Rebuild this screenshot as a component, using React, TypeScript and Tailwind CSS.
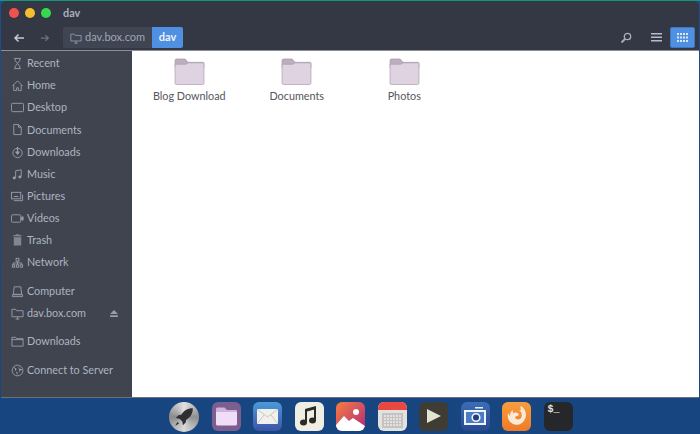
import React from "react";

const stroke = "#979daa";

const Ico = ({ children }: { children: React.ReactNode }) => (
  <svg width="13" height="13" viewBox="0 0 14 14" fill="none" stroke={stroke} strokeWidth="1" className="shrink-0">
    {children}
  </svg>
);

const sideIcons: Record<string, React.ReactNode> = {
  recent: <path d="M3.500 1.500h7M3.500 12.500h7M4.500 1.500v2.500L7 7 4.500 10v2.500M9.500 1.500v2.500L7 7l2.500 3v2.500" />,
  home: <path d="M1.500 7.500 7 2l5.500 5.500M3 6.500v6h3v-3h2v3h3v-6" />,
  desktop: <rect x="0.500" y="2.500" width="13" height="9" rx="1" />,
  documents: <path d="M3 1.500h5l3 3v8H3zM8 1.500v3h3" />,
  downloads: (
    <>
      <circle cx="7" cy="7.500" r="5" />
      <path d="M7 1v7M5 6l2 2.500L9 6" strokeWidth="1.400" />
    </>
  ),
  music: (
    <>
      <path d="M5 10.500V3l6-1v7.500" />
      <circle cx="3.500" cy="10.800" r="1.600" fill={stroke} stroke="none" />
      <circle cx="9.500" cy="9.800" r="1.600" fill={stroke} stroke="none" />
    </>
  ),
  pictures: (
    <>
      <rect x="0.500" y="2.500" width="10" height="7" />
      <path d="M12.500 5v6.500H3M3 7h5" />
    </>
  ),
  videos: (
    <>
      <rect x="0.500" y="3" width="10" height="8" rx="1" />
      <path d="M11 6l2-1v4l-2-1z" fill={stroke} />
    </>
  ),
  trash: (
    <>
      <path d="M3 3.500h8v9H3z" fill={stroke} stroke="none" opacity="0.75" />
      <path d="M2.500 2h9M5 1h4" />
    </>
  ),
  network: (
    <>
      <rect x="5.500" y="2.500" width="3" height="3" />
      <rect x="1.500" y="9.500" width="2.500" height="2.500" />
      <rect x="5.750" y="9.500" width="2.500" height="2.500" />
      <rect x="10" y="9.500" width="2.500" height="2.500" />
      <path d="M7 5.500v4M2.500 9.500V7.500h9v2" />
    </>
  ),
  computer: <path d="M3.500 2h7l1 8h-9zM1.500 10.500h11v2h-11z" />,
  share: <path d="M1 2.500h4l1 1.500h7v6.500H1zM7 10.500v2.500M5 13h4" />,
  folder: <path d="M1 2.500h4l1 1.500h7v8H1zM1 5h12" />,
  server: (
    <>
      <circle cx="7" cy="7" r="5.800" />
      <path d="M3 3l3 2-1 3 2 1v3.500M9 2l-1 2.500 3 1 1.500 1-3 .5-1 3" fill={stroke} stroke="none" />
    </>
  ),
};

const Row = ({ icon, label, eject }: { icon: string; label: string; eject?: boolean }) => (
  <div className="h-[22.100px] flex items-center pl-[10px] pr-[14px] gap-[3px]">
    <Ico>{sideIcons[icon]}</Ico>
    <span className="text-[10.800px] text-[#aeb4c0] leading-none whitespace-nowrap">{label}</span>
    {eject && (
      <svg width="8" height="7" viewBox="0 0 9 8" className="ml-auto" fill={stroke}>
        <path d="M4.500 0 9 4.500H0zM0 6h9v2H0z" />
      </svg>
    )}
  </div>
);

const Sep = ({ h }: { h: string }) => <div className={h} />;

const Folder = ({ label }: { label: string }) => (
  <div className="w-[107.500px] flex flex-col items-center">
    <svg width="31" height="27" viewBox="0 0 32 28" className="mt-[7px]">
      <path d="M1 2.500Q1 1 2.500 1h9l3 3.500H30Q31 4.500 31 6v4H1z" fill="#bcaebf" stroke="#a598a8" strokeWidth="0.700" />
      <path d="M1 6.500h11l3-1.500h15.500Q31 5 31 6v20q0 1.500-1.500 1.500h-27Q1 27.500 1 26z" fill="#dfd3e2" stroke="#a89bab" strokeWidth="0.700" />
    </svg>
    <span className="text-[10.800px] text-[#55555d] mt-[4px] leading-[14px] whitespace-nowrap">{label}</span>
  </div>
);

const DockTile = ({ className, children }: { className: string; children?: React.ReactNode }) => (
  <div className={`w-[29px] h-[29px] rounded-[6px] flex items-center justify-center overflow-hidden shrink-0 ${className}`}>
    {children}
  </div>
);

export default function App() {
  return (
    <div
      className="w-[700px] h-[434px] overflow-hidden flex flex-col bg-gradient-to-b from-[#1d4f8c] to-[#17457f]"
      style={{ fontFamily: 'Lato, "Open Sans", sans-serif' }}
    >
      <div className="h-[398px] bg-[linear-gradient(#15967a_1px,transparent_1px)] pt-px flex flex-col shrink-0">
        <div className="flex-1 mx-px flex flex-col rounded-t-[5px] overflow-hidden bg-[#333844] border-b border-[#6b7079] min-h-0">
          <div className="h-[24px] flex items-center pl-[8px] shrink-0">
            <span className="w-[10px] h-[10px] rounded-full bg-[#ee5350]" />
            <span className="w-[10px] h-[10px] rounded-full bg-[#f5bd2f] ml-[6px]" />
            <span className="w-[10px] h-[10px] rounded-full bg-[#36d94e] ml-[6px]" />
            <span className="text-[10.800px] font-bold text-[#a9afbc] ml-[12px]">dav</span>
          </div>

          <div className="h-[25px] flex items-center shrink-0 relative">
            <svg width="12" height="12" viewBox="0 0 12 12" className="ml-[12px]" fill="none" stroke="#c5cad4" strokeWidth="1.500">
              <path d="M11 6H2M5.500 2.500 2 6l3.500 3.500" />
            </svg>
            <svg width="10" height="10" viewBox="0 0 12 12" className="ml-[15px]" fill="none" stroke="#6d7380" strokeWidth="1.500">
              <path d="M1 6h9M6.500 2.500 10 6l-3.500 3.500" />
            </svg>
            <div className="ml-[13px] h-[21px] flex items-stretch rounded-[2px] overflow-hidden">
              <div className="w-[89px] bg-[#3f4552] flex items-center pl-[7px] gap-[3px]">
                <svg width="12" height="12" viewBox="0 0 14 14" fill="none" stroke={stroke}>
                  <path d="M1 2.500h4l1 1.500h7v6.500H1zM7 10.500v2.500M5 13h4" />
                </svg>
                <span className="text-[11px] text-[#a0a6b3] whitespace-nowrap">dav.box.com</span>
              </div>
              <div className="w-[31px] bg-[#4f90e2] flex items-center justify-center">
                <span className="text-[11px] font-bold text-[#eef4fc]">dav</span>
              </div>
            </div>
            <svg width="12" height="12" viewBox="0 0 12 12" className="ml-auto" fill="none" stroke="#a9afbb">
              <circle cx="7.500" cy="4.500" r="3.200" strokeWidth="1.300" />
              <path d="M5 7 1.500 10.500" strokeWidth="1.800" />
            </svg>
            <svg width="11" height="9" viewBox="0 0 11 9" className="ml-[19px]" fill="#b5bbc7">
              <path d="M0 0h11v1.600H0zM0 3.500h11v1.600H0zM0 7h11v1.600H0z" />
            </svg>
            <div className="ml-[8px] mr-[4px] w-[25px] h-[21px] rounded-[2px] bg-[#4f90e2] border border-[#3f77bf] flex items-center justify-center">
              <svg width="11" height="9" viewBox="0 0 11 9" fill="#dbe8f9">
                <path d="M0 0h2v2H0zM3 0h2v2H3zM6 0h2v2H6zM9 0h2v2H9zM0 3.500h2v2H0zM3 3.500h2v2H3zM6 3.500h2v2H6zM9 3.500h2v2H9zM0 7h2v2H0zM3 7h2v2H3zM6 7h2v2H6zM9 7h2v2H9z" />
              </svg>
            </div>
          </div>

          <div className="flex flex-1 min-h-0 border-t border-[#8b8e94]">
            <div className="w-[131px] shrink-0 bg-[#3f444f] pt-[1.600px]">
              <Row icon="recent" label="Recent" />
              <Row icon="home" label="Home" />
              <Row icon="desktop" label="Desktop" />
              <Row icon="documents" label="Documents" />
              <Row icon="downloads" label="Downloads" />
              <Row icon="music" label="Music" />
              <Row icon="pictures" label="Pictures" />
              <Row icon="videos" label="Videos" />
              <Row icon="trash" label="Trash" />
              <Row icon="network" label="Network" />
              <Sep h="h-[6.500px]" />
              <Row icon="computer" label="Computer" />
              <Row icon="share" label="dav.box.com" eject />
              <Sep h="h-[6.500px]" />
              <Row icon="folder" label="Downloads" />
              <Sep h="h-[6.500px]" />
              <Row icon="server" label="Connect to Server" />
            </div>
            <div className="flex-1 bg-white flex items-start pl-[3.500px]">
              <Folder label="Blog Download" />
              <Folder label="Documents" />
              <Folder label="Photos" />
            </div>
          </div>
        </div>
      </div>

      <div className="flex-1 flex items-start gap-[12.500px] pt-[3.500px] pl-[169px]">
        <div className="w-[30px] h-[30px] rounded-full bg-[conic-gradient(#e2e2e2,#8f8f8f,#dadada,#8a8a8a,#e2e2e2)] flex items-center justify-center shrink-0">
          <svg width="22" height="22" viewBox="0 0 20 20" fill="#2f2f33">
            <path d="M18 2c-5 0-8 2-10.500 6L5 8.500 2.500 11l3.500.5L8.500 14l.5 3.500 2.500-2.500.5-2.500c4-2.500 6-5.500 6-10.500zM4 14.500l-2 3.500 3.500-2z" />
          </svg>
        </div>
        <DockTile className="bg-[#7c5f8f]">
          <svg width="23" height="19" viewBox="0 0 23 19">
            <path d="M1 2q0-1.500 1.500-1.500h7L12 3h9q1 0 1 1v2H1z" fill="#cdb4dc" />
            <path d="M1 5h21v12q0 1.500-1.500 1.500h-18Q1 18.500 1 17z" fill="#f0def6" />
          </svg>
        </DockTile>
        <DockTile className="bg-gradient-to-b from-[#4a9ad9] to-[#3c54a6]">
          <svg width="21" height="15" viewBox="0 0 21 15">
            <rect width="21" height="15" fill="#f1f0ec" />
            <path d="M0 0l10.500 8L21 0M0 15l7-9M21 15l-7-9" fill="none" stroke="#c4c6c8" />
          </svg>
        </DockTile>
        <DockTile className="bg-[#f0eee2]">
          <svg width="20" height="22" viewBox="0 0 20 22" fill="#2a2a28">
            <path d="M6 4l11-3v3L8 6.500V17H6zM15 3h2v12h-2z" />
            <ellipse cx="4.500" cy="17.500" rx="3.500" ry="3" />
            <ellipse cx="13.500" cy="15.500" rx="3.500" ry="3" />
          </svg>
        </DockTile>
        <DockTile className="bg-gradient-to-br from-[#f97c35] to-[#b01f72]">
          <svg width="29" height="29" viewBox="0 0 29 29" fill="#fff">
            <circle cx="20" cy="10" r="3" />
            <path d="M0 23l8-9 5 5 4-3 12 8v5H0z" />
          </svg>
        </DockTile>
        <DockTile className="bg-[#e4e2df] flex-col justify-start">
          <div className="h-[8px] w-full bg-[#e8483f] shrink-0" />
          <div className="w-[21px] h-[15px] mt-[3px] border border-[#c5c3c1] bg-[linear-gradient(#c5c3c1_1px,transparent_1px),linear-gradient(90deg,#c5c3c1_1px,transparent_1px)] bg-[size:3px_3px]" />
        </DockTile>
        <DockTile className="bg-[#3e3c35]">
          <svg width="16" height="16" viewBox="0 0 16 16" fill="#e3e3cf">
            <path d="M1 1l14 7-14 7z" />
          </svg>
        </DockTile>
        <DockTile className="bg-gradient-to-b from-[#3c6db6] to-[#29488e]">
          <svg width="24" height="19" viewBox="0 0 24 19">
            <rect x="12" y="0" width="8" height="1.500" fill="#e8eef8" />
            <rect x="1" y="3" width="22" height="15" fill="#f0f4fb" />
            <rect x="3" y="5" width="18" height="11" fill="#4a7bc4" />
            <circle cx="13" cy="10.500" r="3.800" fill="#1f3f7d" stroke="#f0f4fb" strokeWidth="1.600" />
          </svg>
        </DockTile>
        <DockTile className="bg-gradient-to-b from-[#f89d3c] to-[#ee7a2a]">
          <svg width="22" height="22" viewBox="0 0 22 22">
            <path d="M15 1c5 3 6 9 4 13-2 5-8 7-12 5C3 17 1 13 2 8c1 1 1 2 2 3 0-3 1-5 3-6-.5 2 0 3 1 3 2-1 5 0 5 2-1 1-3 1-4 2 0 2 3 3 5 2 3-2 2-7-1-9 1 0 2 0 2 0-.5-2-1-3-0-4z" fill="#f7ead8" />
          </svg>
        </DockTile>
        <DockTile className="bg-[#25272a] items-start justify-start">
          <span
            className="text-[10px] font-bold text-[#e8e8e8] ml-[4px] mt-[3px] leading-none"
            style={{ fontFamily: '"Liberation Mono", monospace' }}
          >
            $_
          </span>
        </DockTile>
      </div>
    </div>
  );
}
